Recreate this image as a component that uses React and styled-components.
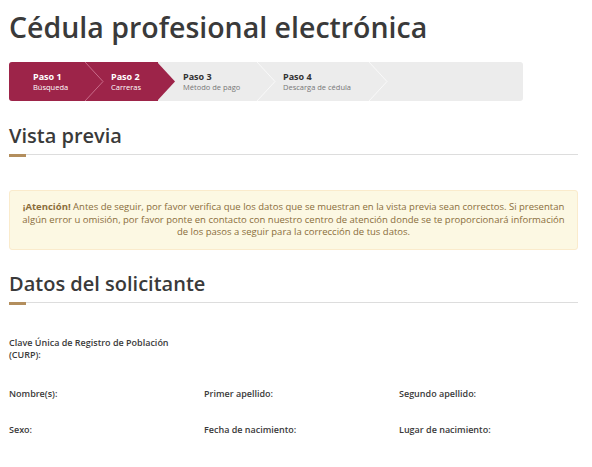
import React from 'react'
import styled, {createGlobalStyle} from 'styled-components'

const Global = createGlobalStyle`
    body {
        margin: 0;
        background: #fff;
        font-family: "Open Sans", "Noto Sans", sans-serif;
        color: #333;
    }
`

const steps = [
    {title: 'Paso 1', sub: 'Búsqueda', w: 77, done: true, edge: '#c96d8a'},
    {title: 'Paso 2', sub: 'Carreras', w: 72, done: true, last: true},
    {title: 'Paso 3', sub: 'Método de pago', w: 100, edge: '#f9f9f9'},
    {title: 'Paso 4', sub: 'Descarga de cédula', w: 112, edge: '#f9f9f9'},
]

const fields = [
    ['Nombre(s):', 'Primer apellido:', 'Segundo apellido:'],
    ['Sexo:', 'Fecha de nacimiento:', 'Lugar de nacimiento:'],
]

function Chevron({fill, stroke}) {
    return (
        <Arrow width="19" height="39" viewBox="0 0 19 39">
            <polygon points="0,0 18,19.5 0,39" fill={fill} stroke="none"/>
            {stroke && <polyline points="0,0 18,19.5 0,39" fill="none" stroke={stroke} strokeWidth="1"/>}
        </Arrow>
    )
}

export default function App() {
    return (
        <Page>
            <Global/>
            <Title>Cédula profesional electrónica</Title>
            <Stepper>
                {steps.map(s => (
                    <Step key={s.title} $w={s.w} $done={s.done}>
                        <StepTitle>{s.title}</StepTitle>
                        <StepSub $done={s.done}>{s.sub}</StepSub>
                        <Chevron fill={s.done ? '#9d2449' : '#ececec'} stroke={s.last ? null : s.edge}/>
                    </Step>
                ))}
            </Stepper>

            <Heading>Vista previa</Heading>
            <Alert>
                <b>¡Atención!</b> Antes de seguir, por favor verifica que los datos que se muestran en la vista previa sean correctos. Si presentan<br/>
                algún error u omisión, por favor ponte en contacto con nuestro centro de atención donde se te proporcionará información<br/>
                de los pasos a seguir para la corrección de tus datos.
            </Alert>

            <Heading $gap={21}>Datos del solicitante</Heading>
            <Fields>
                <Field $h={51}>
                    <Label $narrow>Clave Única de Registro de Población (CURP):</Label>
                </Field>
                {fields.flat().map(f => (
                    <Field key={f} $h={36}>
                        <Label>{f}</Label>
                    </Field>
                ))}
            </Fields>
        </Page>
    )
}

const Page = styled.main`
    padding: 0 14px 20px 9px;
`
const Title = styled.h1`
    margin: 0;
    padding-top: 8px;
    font-size: 28.5px;
    line-height: 38px;
    font-weight: 600;
    color: #3a3a3a;
`
const Stepper = styled.div`
    display: flex;
    width: 514px;
    height: 39px;
    margin-top: 16px;
    background: #ececec;
    border-radius: 3px;
    overflow: hidden;
`
const Step = styled.div`
    position: relative;
    flex: 0 0 ${p => p.$w}px;
    display: flex;
    flex-direction: column;
    justify-content: center;
    padding-left: 25px;
    box-sizing: border-box;
    background: ${p => p.$done ? '#9d2449' : 'transparent'};
    color: ${p => p.$done ? '#fff' : '#333'};
    &:first-child {
        padding-left: 24px;
    }
`
const StepTitle = styled.span`
    font-size: 9px;
    font-weight: 700;
    line-height: 11px;
`
const StepSub = styled.span`
    font-size: 7.5px;
    line-height: 10px;
    color: ${p => p.$done ? '#fff' : '#777'};
`
const Arrow = styled.svg`
    position: absolute;
    top: 0;
    right: -18px;
    z-index: 1;
    display: block;
`
const Heading = styled.h2`
    position: relative;
    margin: ${p => p.$gap ?? 22}px 0 0;
    padding-bottom: 5px;
    font-size: 20px;
    line-height: 26px;
    font-weight: 600;
    color: #3a3a3a;
    border-bottom: 1px solid #dddddd;
    &::after {
        content: '';
        position: absolute;
        left: 0;
        bottom: -3px;
        width: 17px;
        height: 3px;
        background: #b38e5d;
    }
`
const Alert = styled.div`
    margin-top: 35px;
    padding: 10px 8px;
    background: #fcf8e3;
    border: 1px solid #faebcc;
    border-radius: 3px;
    text-align: center;
    font-size: 9.5px;
    line-height: 12.5px;
    color: #8a6d3b;
    b {
        font-weight: 700;
    }
`
const Fields = styled.div`
    display: grid;
    grid-template-columns: repeat(3, 195px);
    margin-top: 34px;
`
const Field = styled.div`
    height: ${p => p.$h}px;
    &:first-child {
        grid-column: 1 / -1;
    }
`
const Label = styled.div`
    max-width: ${p => p.$narrow ? '185px' : 'none'};
    font-size: 9px;
    line-height: 12px;
    font-weight: 600;
    color: #3a3a3a;
`
